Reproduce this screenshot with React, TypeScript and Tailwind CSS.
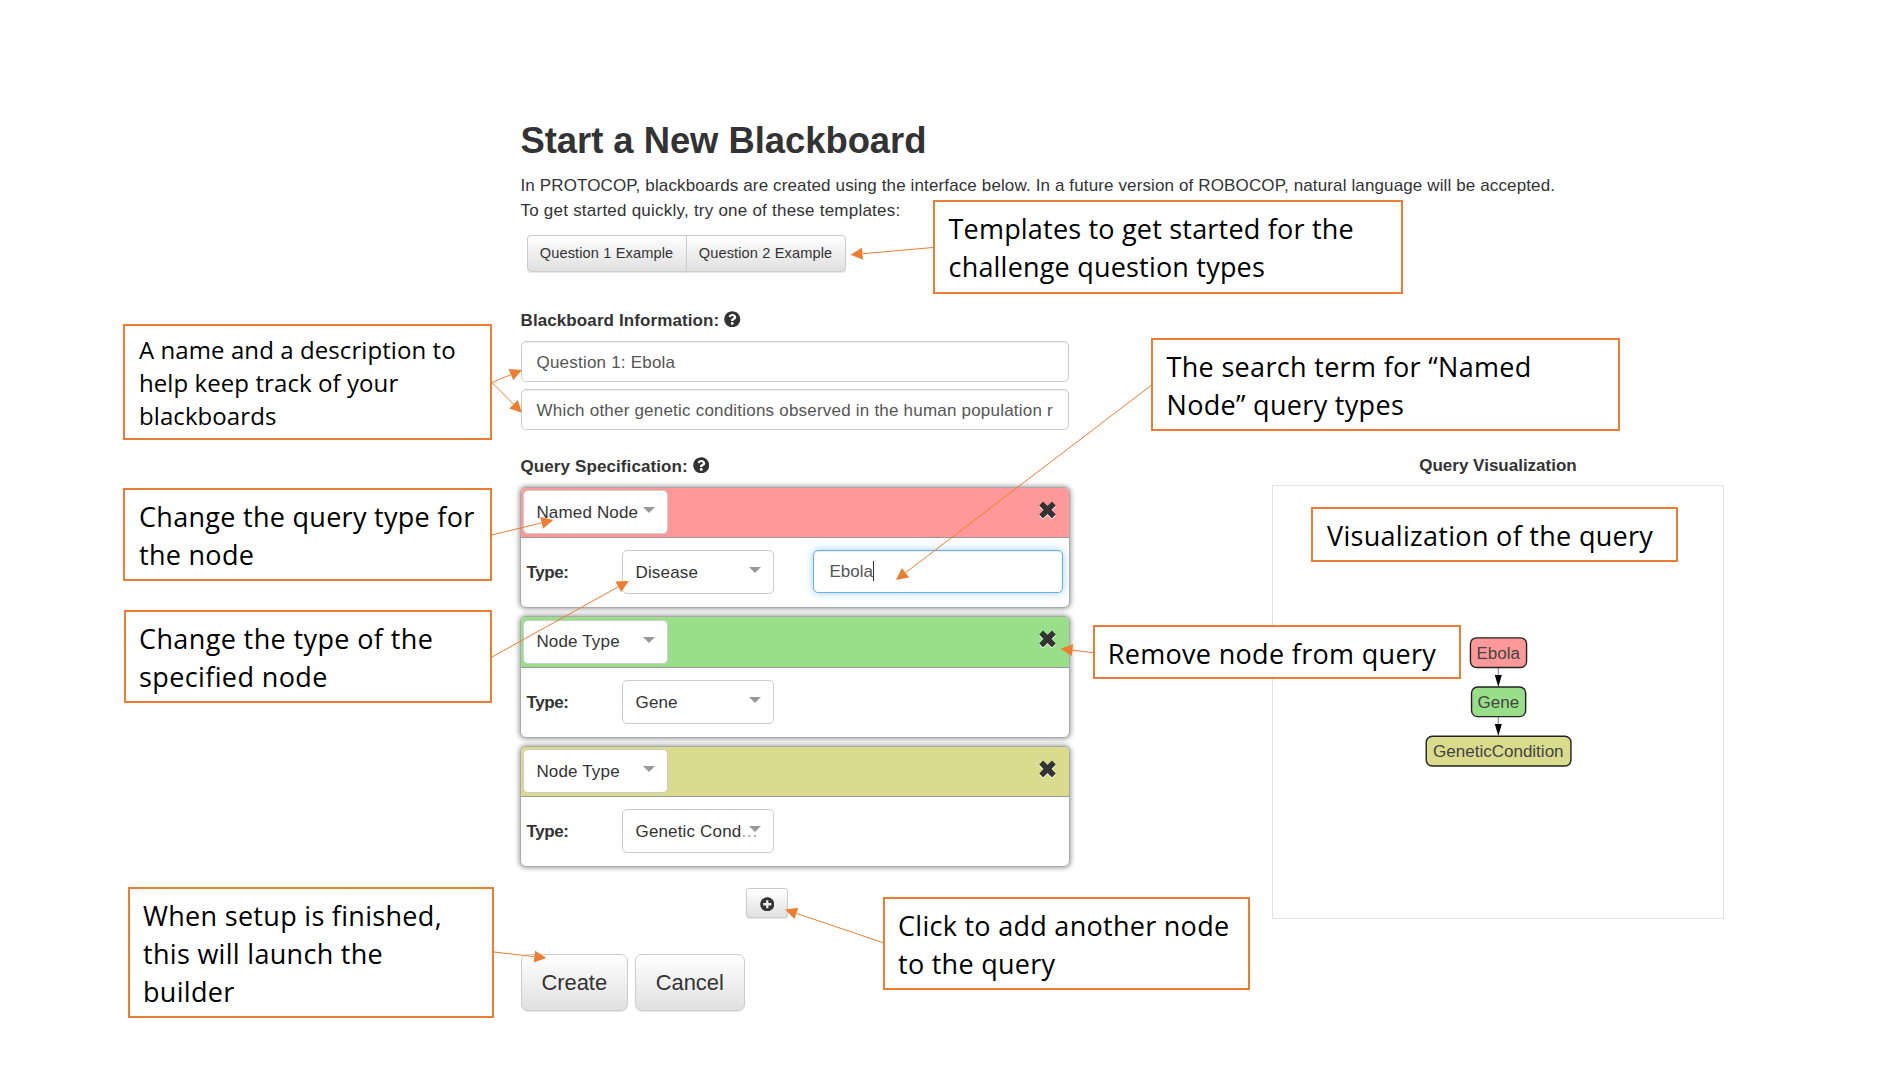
import React from "react";
import { FaPlusCircle, FaQuestionCircle } from "react-icons/fa";

const ACCENT = "#ed7d31";

type QueryNode = {
  kind: string;
  type: string;
  color: string;
  term?: string;
  shortened?: boolean;
};

const NODES: QueryNode[] = [
  { kind: "Named Node", type: "Disease", color: "bg-[#ff9999]", term: "Ebola" },
  { kind: "Node Type", type: "Gene", color: "bg-[#99df8a]" },
  { kind: "Node Type", type: "Genetic Cond", color: "bg-[#dbdb8d]", shortened: true },
];

const CALLOUTS: { lines: string[]; place: string }[] = [
  {
    lines: ["Templates to get started for the", "challenge question types"],
    place: "left-[933px] top-[200px] w-[470px] h-[94px] pt-[8px] pl-[13.5px] text-[27px] leading-[38px] tracking-[0.2px]",
  },
  {
    lines: ["The search term for “Named", "Node” query types"],
    place: "left-[1151px] top-[338px] w-[469px] h-[93px] pt-[8px] pl-[13.5px] text-[27px] leading-[38px] tracking-[0.32px]",
  },
  {
    lines: ["A name and a description to", "help keep track of your", "blackboards"],
    place: "left-[123px] top-[324px] w-[369px] h-[116px] pt-[7px] pl-[14px] text-[24px] leading-[33px] tracking-[0.08px]",
  },
  {
    lines: ["Change the query type for", "the node"],
    place: "left-[123px] top-[488px] w-[369px] h-[93px] pt-[8px] pl-[14px] text-[27px] leading-[38px] tracking-[0.29px]",
  },
  {
    lines: ["Change the type of the", "specified node"],
    place: "left-[124px] top-[610px] w-[368px] h-[93px] pt-[8px] pl-[13px] text-[27px] leading-[38px] tracking-[0.38px]",
  },
  {
    lines: ["When setup is finished,", "this will launch the", "builder"],
    place: "left-[128px] top-[887px] w-[366px] h-[131px] pt-[8px] pl-[13px] text-[27px] leading-[38px] tracking-[0.3px]",
  },
  {
    lines: ["Click to add another node", "to the query"],
    place: "left-[883px] top-[897px] w-[367px] h-[93px] pt-[8px] pl-[13px] text-[27px] leading-[38px] tracking-[0.28px]",
  },
  {
    lines: ["Remove node from query"],
    place: "left-[1093px] top-[625px] w-[368px] h-[54px] pt-[8px] pl-[12.7px] text-[27px] leading-[38px] tracking-[0.32px]",
  },
  {
    lines: ["Visualization of the query"],
    place: "left-[1311px] top-[507px] w-[367px] h-[55px] pt-[8px] pl-[14px] text-[27px] leading-[38px] tracking-[0.3px]",
  },
];

// Each arrow runs from the edge of its callout to the element it explains.
const ARROWS: [number, number, number, number][] = [
  [933, 247.5, 850.5, 254.8],
  [1151, 385.5, 896, 580],
  [492, 382.5, 522, 370],
  [492, 382.5, 522, 412.7],
  [492, 535, 553.3, 520],
  [492, 657, 628.8, 581],
  [494, 952, 546.3, 958],
  [883, 942.7, 785, 909.5],
  [1093, 652.7, 1060.5, 648.7],
];

function Arrow({ coords: [x1, y1, x2, y2] }: { coords: [number, number, number, number] }) {
  const length = Math.hypot(x2 - x1, y2 - y1);
  const ux = (x2 - x1) / length;
  const uy = (y2 - y1) / length;
  const bx = x2 - ux * 12;
  const by = y2 - uy * 12;
  return (
    <g>
      <line x1={x1} y1={y1} x2={bx} y2={by} stroke={ACCENT} strokeWidth="1" />
      <polygon
        points={`${x2},${y2} ${bx - uy * 6},${by + ux * 6} ${bx + uy * 6},${by - ux * 6}`}
        fill={ACCENT}
      />
    </g>
  );
}

function Select({ label, size, shortened }: { label: string; size: string; shortened?: boolean }) {
  return (
    <div
      className={`relative flex h-[44px] items-center rounded-[5px] border-[1.2px] border-[#cccccc] bg-white text-[#333333] ${size}`}
    >
      <span className="mt-[2px] tracking-[0.16px] whitespace-nowrap">
        {label}
        {shortened && <span className="tracking-[0.8px] text-[#999999]">...</span>}
      </span>
      <span className="absolute top-[16px] right-[12.5px] size-0 border-x-[6px] border-t-[6.5px] border-x-transparent border-t-[#999999]" />
    </div>
  );
}

function RemoveIcon() {
  return (
    <svg
      className="mt-[10.6px] mr-[13.4px] h-[18px] w-[17px] drop-shadow-[0_1px_0_#ffffff]"
      viewBox="0 0 17 18"
    >
      <path
        d="M4.1.9 8.5 5.3 12.9.9 16.3 4.5 12.1 9 16.3 13.5 12.9 17.1 8.5 12.7 4.1 17.1.7 13.5 4.9 9 .7 4.5Z"
        fill="#333333"
        stroke="#333333"
        strokeWidth="0.8"
        strokeLinejoin="round"
      />
    </svg>
  );
}

function NodeCard({ node }: { node: QueryNode }) {
  return (
    <div className="h-[121.4px] overflow-hidden rounded-[6px] border border-[#aaaaaa] bg-white shadow-[0_0_5px_1px_rgba(0,0,0,0.38)]">
      <div className={`flex h-[50.6px] justify-between border-b border-[#999999] pt-[2.4px] pl-[2.4px] ${node.color}`}>
        <Select label={node.kind} size="w-[145px] pl-[12px]" />
        <RemoveIcon />
      </div>
      <div className="flex pt-[12px] pl-[5.5px]">
        <div className="w-[95px] pt-[11px] font-bold tracking-[-0.4px]">Type:</div>
        <Select label={node.type} size="w-[152.5px] pl-[13px]" shortened={node.shortened} />
        {node.term && (
          <div className="ml-[39px] flex h-[42.4px] w-[250px] items-center rounded-[5px] border-[1.4px] border-[#66afe9] bg-white pl-[15.5px] text-[#555555] shadow-[inset_0_1px_1px_rgba(0,0,0,0.075),0_0_9px_rgba(102,175,233,0.6)]">
            <span className="mt-[2px]">{node.term}</span>
            <span className="-mt-[1px] h-[20px] w-px bg-[#333333]" />
          </div>
        )}
      </div>
    </div>
  );
}

function Field({ children }: { children: React.ReactNode }) {
  return (
    <div className="h-[41.4px] w-[548.5px] rounded-[5px] border-[1.3px] border-[#cccccc] bg-white px-[15px] text-[#555555] shadow-[inset_0_1px_1px_rgba(0,0,0,0.075)]">
      <div className="leading-[41px] tracking-[0.21px] whitespace-nowrap">{children}</div>
    </div>
  );
}

function FieldLabel({ children }: { children: React.ReactNode }) {
  return (
    <div className="flex items-center gap-[5px] pl-[0.5px] font-bold tracking-[0.1px]">
      {children}
      <FaQuestionCircle className="-mt-[3px] size-[16.5px]" />
    </div>
  );
}

const BUTTON =
  "flex items-center justify-center border-[1.2px] border-[#cccccc] bg-linear-to-b from-white to-[#e0e0e0] shadow-[0_1px_1px_rgba(0,0,0,0.1)]";

function QueryGraph() {
  return (
    <svg className="h-full w-full" viewBox="1273.5 486.5 449 431" fontSize="17" textAnchor="middle">
      <g stroke="#999999" strokeWidth="1.3">
        <path d="M1498.3 668V677M1498.3 717V726" />
      </g>
      <path d="M1494.8 675h7l-3.5 12zM1494.8 724h7l-3.5 12z" fill="#000000" />
      <g stroke="#222222" strokeWidth="1.4">
        <rect x="1470.5" y="638" width="56" height="29.6" rx="6" fill="#ff9999" />
        <rect x="1471.6" y="687" width="54" height="29.6" rx="6" fill="#99df8a" />
        <rect x="1426.4" y="736.2" width="144.4" height="29.6" rx="6" fill="#dbdb8d" />
      </g>
      <g fill="#444444">
        <text x="1498.3" y="659">Ebola</text>
        <text x="1498.3" y="708">Gene</text>
        <text x="1498.3" y="757.2">GeneticCondition</text>
      </g>
    </svg>
  );
}

export default function App() {
  return (
    <div className="relative h-[1069px] w-[1900px] overflow-hidden bg-white pt-[121px] pl-[520px] font-['Liberation_Sans',sans-serif] text-[17px] leading-[24.3px] text-[#333333]">
      <h2 className="pl-[0.5px] text-[36.45px] leading-[40px] font-bold tracking-[-0.05px]">Start a New Blackboard</h2>
      <p className="mt-[13px] pl-[0.5px] whitespace-nowrap">
        <span className="tracking-[0.13px]">
          In PROTOCOP, blackboards are created using the interface below. In a future version of ROBOCOP, natural
          language will be accepted.
        </span>
        <br />
        <span className="relative top-[0.7px] tracking-[0.23px]">To get started quickly, try one of these templates:</span>
      </p>
      <div className="mt-[12.4px] ml-[6.5px] flex h-[37px] text-[14.6px] tracking-[0.12px]">
        <div className={`w-[160px] rounded-l-[4px] ${BUTTON}`}>Question 1 Example</div>
        <div className={`-ml-px w-[160px] rounded-r-[4px] ${BUTTON}`}>Question 2 Example</div>
      </div>

      <div className="mt-[36.6px] flex">
        <main className="w-[550px]">
          <FieldLabel>Blackboard Information:</FieldLabel>
          <div className="mt-[8px] mb-[24.6px] ml-[0.5px] flex flex-col gap-[6.3px]">
            <Field>Question 1: Ebola</Field>
            <Field>Which other genetic conditions observed in the human population r</Field>
          </div>
          <FieldLabel>Query Specification:</FieldLabel>
          <div className="mt-[8px] flex flex-col gap-[8px]">
            {NODES.map((node, i) => (
              <NodeCard key={i} node={node} />
            ))}
          </div>
          <div className="mt-[21px] flex justify-center pr-[56px]">
            <div className={`h-[30px] w-[42px] rounded-[3px] ${BUTTON}`}>
              <FaPlusCircle className="mt-[2px] size-[14.5px]" />
            </div>
          </div>
          <div className="mt-[36.3px] ml-[0.5px] flex gap-[6.5px] text-[21.9px]">
            <div className={`h-[57px] w-[107.5px] rounded-[7px] ${BUTTON}`}>Create</div>
            <div className={`h-[57px] w-[110.5px] rounded-[7px] ${BUTTON}`}>Cancel</div>
          </div>
        </main>

        <aside className="mt-[145px] ml-[202px] w-[452px]">
          <div className="text-center font-bold">Query Visualization</div>
          <div className="mt-[7.2px] h-[434px] border-[1.5px] border-[#e2e2e2]">
            <QueryGraph />
          </div>
        </aside>
      </div>

      <svg className="pointer-events-none absolute inset-0" width="1900" height="1069">
        {ARROWS.map((coords, i) => (
          <Arrow key={i} coords={coords} />
        ))}
      </svg>
      {CALLOUTS.map(({ lines, place }) => (
        <div
          key={lines[0]}
          className={`absolute border-2 border-[#ed7d31] bg-white font-['Open_Sans',sans-serif] whitespace-nowrap text-black ${place}`}
        >
          {lines.map((line) => (
            <div key={line}>{line}</div>
          ))}
        </div>
      ))}
    </div>
  );
}
